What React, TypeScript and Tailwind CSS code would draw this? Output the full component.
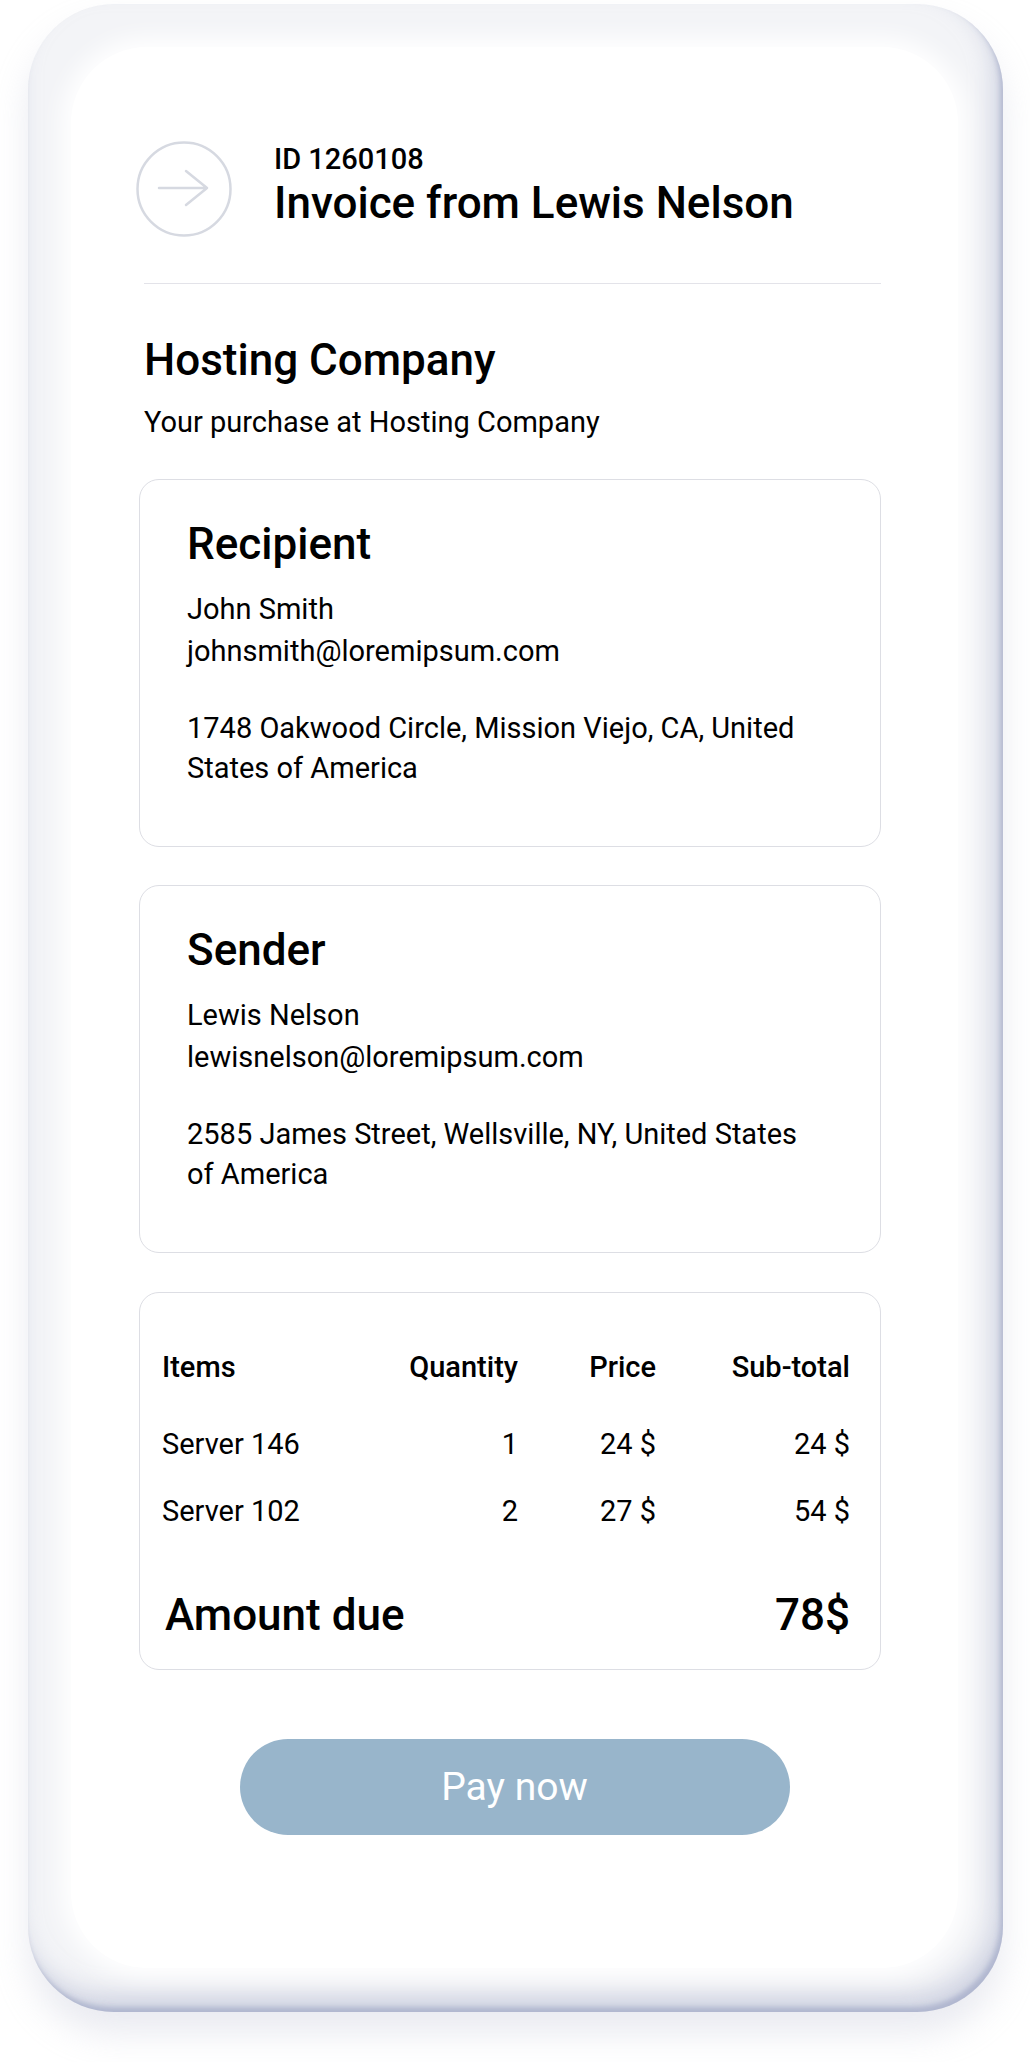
import React from 'react';

type Party = {
  title: string;
  name: string;
  email: string;
  address: string;
};

const parties: Party[] = [
  {
    title: 'Recipient',
    name: 'John Smith',
    email: 'johnsmith@loremipsum.com',
    address: '1748 Oakwood Circle, Mission Viejo, CA, United States of America',
  },
  {
    title: 'Sender',
    name: 'Lewis Nelson',
    email: 'lewisnelson@loremipsum.com',
    address: '2585 James Street, Wellsville, NY, United States of America',
  },
];

const items = [
  { name: 'Server 146', qty: 1, price: '24 $', total: '24 $' },
  { name: 'Server 102', qty: 2, price: '27 $', total: '54 $' },
];

function PartyCard({ party, className = '' }: { party: Party; className?: string }) {
  return (
    <div className={`border border-[#dddee4] rounded-[20px] pl-[47px] pt-[38px] pb-[58px] ${className}`}>
      <h3 className="text-[44px] leading-[52px] font-medium">{party.title}</h3>
      <p className="mt-[18px] text-[29px] leading-[42px]">{party.name}</p>
      <p className="text-[29px] leading-[42px]">{party.email}</p>
      <p className="mt-[36px] max-w-[620px] text-[29px] leading-[40px]">{party.address}</p>
    </div>
  );
}

export default function App() {
  return (
    <div className="min-h-screen bg-white pt-[4px] pl-[28px] font-['Roboto',sans-serif] text-black">
      {/* Phone frame */}
      <div className="w-[975px] h-[2008px] rounded-[86px] bg-[#f3f4f7] pt-[43px] pl-[43px] pr-[45px] pb-[44px] shadow-[inset_-3px_-5px_5px_rgba(150,158,192,0.55),inset_-10px_-18px_22px_rgba(175,182,208,0.5),0_22px_34px_rgba(185,188,208,0.3)]">
        {/* Screen */}
        <div className="h-full rounded-[76px] bg-white shadow-[0_0_22px_10px_rgba(255,255,255,0.95)]">
          {/* Header */}
          <div className="flex items-start pl-[65px] pt-[94px]">
            <svg viewBox="0 0 96 96" className="w-[96px] h-[96px] shrink-0" fill="none" stroke="#d6d9e1" strokeWidth="2.5" strokeLinecap="round" strokeLinejoin="round">
              <circle cx="48" cy="48" r="46.5" />
              <path d="M23 47h48M50 30l21 17-21 17" />
            </svg>
            <div className="ml-[42px] mt-[2px]">
              <div className="text-[29px] leading-[32px] font-medium">ID 1260108</div>
              <div className="mt-[2px] text-[44px] leading-[52px] font-medium">Invoice from Lewis Nelson</div>
            </div>
          </div>

          <div className="pl-[68px] pr-[77px]">
            <div className="pl-[5px]">
              <div className="mt-[46px] border-t border-[#e3e3e9]" />
              <h2 className="mt-[50px] text-[44px] leading-[52px] font-medium">Hosting Company</h2>
              <p className="mt-[20px] text-[29px] leading-[32px]">Your purchase at Hosting Company</p>
            </div>

            <PartyCard party={parties[0]} className="mt-[41px]" />
            <PartyCard party={parties[1]} className="mt-[38px]" />

            {/* Items */}
            <div className="mt-[39px] border border-[#dddee4] rounded-[20px] pl-[22px] pr-[30px] pt-[58px] pb-[28px]">
              <div className="grid grid-cols-[199px_157px_138px_194px] text-[29px] leading-[32px] font-medium">
                <span>Items</span>
                <span className="text-right">Quantity</span>
                <span className="text-right">Price</span>
                <span className="text-right">Sub-total</span>
              </div>
              <div className="mt-[45px] flex flex-col gap-[35px]">
                {items.map((it) => (
                  <div key={it.name} className="grid grid-cols-[199px_157px_138px_194px] text-[29px] leading-[32px]">
                    <span>{it.name}</span>
                    <span className="text-right">{it.qty}</span>
                    <span className="text-right">{it.price}</span>
                    <span className="text-right">{it.total}</span>
                  </div>
                ))}
              </div>
              <div className="mt-[62px] pl-[3px] flex items-center justify-between text-[44px] leading-[52px] font-medium">
                <span>Amount due</span>
                <span>78$</span>
              </div>
            </div>
          </div>

          <button className="mt-[69px] mx-auto flex items-center justify-center w-[550px] h-[96px] rounded-full bg-[#98b5cb] text-white text-[39px] leading-none">
            Pay now
          </button>
        </div>
      </div>
    </div>
  );
}
